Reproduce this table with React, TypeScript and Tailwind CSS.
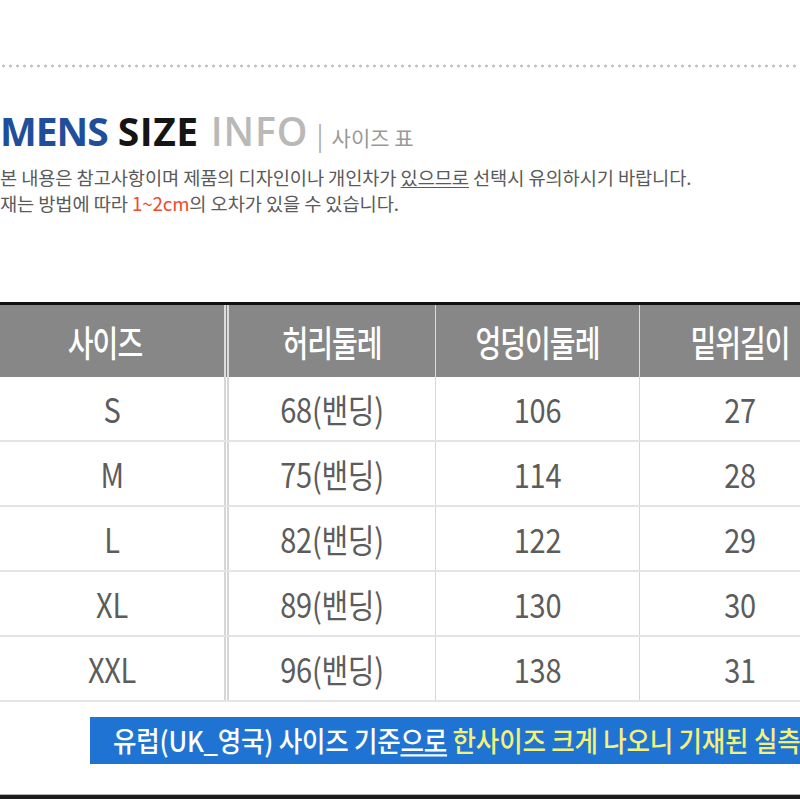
import React from 'react'

const rows = [
  ['S', '68(밴딩)', '106', '27'],
  ['M', '75(밴딩)', '114', '28'],
  ['L', '82(밴딩)', '122', '29'],
  ['XL', '89(밴딩)', '130', '30'],
  ['XXL', '96(밴딩)', '138', '31'],
]

const heads = ['사이즈', '허리둘레', '엉덩이둘레', '밑위길이']

const cellBorder = [
  'border-r-[5px] border-double',
  'border-r',
  'border-r',
  '',
]

const App = () => {
  return (
    <div className="w-[800px] h-[800px] bg-white overflow-hidden flex flex-col" style={{ fontFamily: '"Noto Sans CJK KR", "Noto Sans", sans-serif' }}>
      {/* dotted divider */}
      <div className="mt-[64px] h-[4px] w-full bg-[radial-gradient(circle,#c4c4c4_1.2px,transparent_1.8px)] bg-[length:7px_4px]" />

      {/* title */}
      <div className="mt-[43px] h-[40px] leading-none flex items-baseline whitespace-nowrap">
        <span className="text-[39px] font-bold tracking-[-1px] text-[#1f4f9b]" style={{ fontFamily: '"Open Sans", sans-serif' }}>MENS</span>
        <span className="ml-[10px] text-[39px] font-bold tracking-[0.5px] text-[#151515]" style={{ fontFamily: '"Open Sans", sans-serif' }}>SIZE</span>
        <span className="ml-[12px] text-[39px] font-semibold tracking-[1px] text-[#b9b9b9]" style={{ fontFamily: '"Open Sans", sans-serif' }}>INFO</span>
        <span className="ml-[8px] text-[26px] text-[#b0b0b0]">|</span>
        <span className="ml-[8px] text-[21px] text-[#9a9a9a]">사이즈 표</span>
      </div>

      {/* notes */}
      <div className="mt-[13px] text-[18.7px] text-[#5a5a5a] leading-[26px] whitespace-nowrap tracking-[-0.1px]">
        <div>본 내용은 참고사항이며 제품의 디자인이나 개인차가 <span className="underline underline-offset-2">있으므로</span> 선택시 유의하시기 바랍니다.</div>
        <div>재는 방법에 따라 <span className="text-[#ef4a2c]">1~2cm</span>의 오차가 있을 수 있습니다.</div>
      </div>

      {/* table */}
      <div className="mt-[86px] w-[840px] shrink-0 border-t-[3px] border-[#111]">
        <div className="grid grid-cols-[229px_207px_204px_200px] h-[72px] bg-[#878787]">
          {heads.map((h, i) => (
            <div key={h} className={`flex items-center justify-center border-[#dcdcdc] ${cellBorder[i]} ${i === 0 ? 'pr-[14px]' : ''}`}>
              <span className="inline-block text-[28px] font-medium text-white scale-y-[1.3] tracking-[-1px]">{h}</span>
            </div>
          ))}
        </div>
        {rows.map(r => (
          <div key={r[0]} className="grid grid-cols-[229px_207px_204px_200px] h-[65px] border-b-2 border-[#e4e4e4]">
            {r.map((c, i) => (
              <div key={i} className={`flex items-center justify-center border-[#d6d6d6] ${cellBorder[i]}`}>
                <span className="inline-block text-[29px] text-[#5c5c5c] scale-y-[1.15] tracking-[-0.3px]">{c}</span>
              </div>
            ))}
          </div>
        ))}
      </div>

      {/* banner */}
      <div className="mt-[15px] ml-[90px] h-[47px] shrink-0 bg-[#1f74d3] flex items-center pl-[23px] whitespace-nowrap">
        <span className="inline-block text-[25.5px] font-medium text-white scale-y-[1.1] origin-left tracking-[-0.2px]">
          유럽(UK_영국) 사이즈 기준<span className="underline underline-offset-2">으로</span> <span className="text-[#f3f17a]">한사이즈 크게 나오니 기재된 실측</span>
        </span>
      </div>

      {/* bottom rule */}
      <div className="mt-[30px] border-t border-[#b5b5b5]" />
      <div className="h-[4px] bg-[#1c1c1c]" />
    </div>
  )
}

export default App
